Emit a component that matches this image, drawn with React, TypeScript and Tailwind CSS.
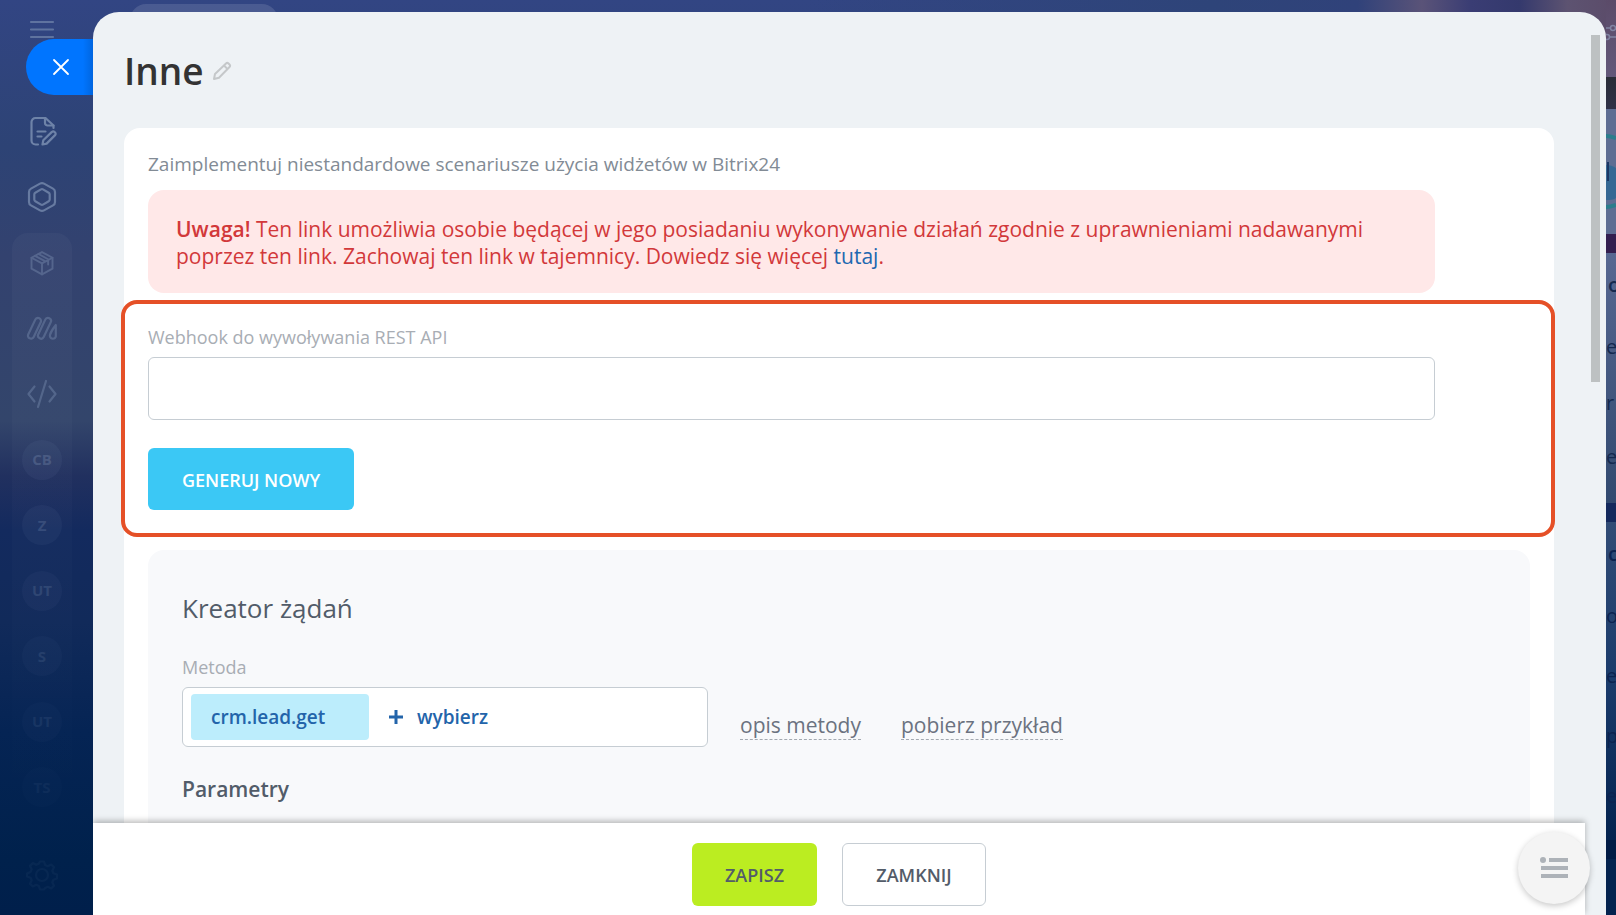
import type { ReactNode } from "react";

interface IconProps {
  size: number;
  children: ReactNode;
}

const Icon = ({ size, children }: IconProps) => (
  <svg
    width={size}
    height={size}
    viewBox="0 0 32 32"
    fill="none"
    stroke="currentColor"
    strokeWidth="2.2"
    strokeLinecap="round"
    strokeLinejoin="round"
    aria-hidden="true"
  >
    {children}
  </svg>
);

// avatars pinned in the left menu
const shortcuts = ["CB", "Z", "UT", "S", "UT", "TS"];

const Sidebar = () => (
  <aside className="relative w-[93px] shrink-0 text-[#7f93b5]">
    <nav className="flex h-full w-[84px] flex-col items-center">
      <button type="button" aria-label="Menu" className="mt-[13px] opacity-60">
        <Icon size={32}>
          <path d="M5 9h22M5 16.500h22M5 24h22" />
        </Icon>
      </button>

      <a href="#documents" aria-label="Dokumenty" className="mt-[70px] opacity-80">
        <Icon size={32}>
          <path d="M12 29.500H9.500a4 4 0 0 1-4-4V7a4 4 0 0 1 4-4h10l8 7.500V13" />
          <path d="M19 3v5a2.500 2.500 0 0 0 2.500 2.500h6" />
          <path d="M11.500 16.500h8M11.500 21.500h4" />
          <path d="M16.500 29.500l.8-4.200 8.600-8.400a1.800 1.800 0 0 1 2.600 0l.6.6a1.800 1.800 0 0 1 0 2.600l-8.500 8.500z" />
        </Icon>
      </a>

      <a href="#apps" aria-label="Aplikacje" className="mt-[34px] opacity-70">
        <Icon size={32}>
          <path d="M14 2.600a4 4 0 0 1 4 0l9 5a4 4 0 0 1 2 3.500v9.800a4 4 0 0 1-2 3.500l-9 5a4 4 0 0 1-4 0l-9-5a4 4 0 0 1-2-3.500v-9.800a4 4 0 0 1 2-3.500z" />
          <path d="M15 8.400a2 2 0 0 1 2 0l5.700 3.300a2 2 0 0 1 1 1.700v5.200a2 2 0 0 1-1 1.700L17 23.600a2 2 0 0 1-2 0l-5.700-3.300a2 2 0 0 1-1-1.700v-5.200a2 2 0 0 1 1-1.700z" />
        </Icon>
      </a>

      {/* Pinned group */}
      <div className="mt-5 flex h-[584px] w-[60px] flex-col items-center justify-between rounded-2xl bg-linear-to-b from-white/3 to-white/0 py-[10px]">
        <a href="#box" aria-label="Magazyn" className="flex size-10 items-center justify-center opacity-40">
          <Icon size={28}>
            <path d="M16 3.500l12 6.500v12.500L16 29 4 22.500V10z" />
            <path d="M4 10l12 6.500L28 10M16 16.500V29M8 7.800l12 6.400M12 5.700l11 6v6" />
          </Icon>
        </a>
        <a href="#marketing" aria-label="Marketing" className="flex size-10 items-center justify-center opacity-40">
          <Icon size={32}>
            <path d="M2.300 21.300L9.300 6.600a3 3 0 0 1 5.400 2.700L7.700 24a3 3 0 0 1-5.400-2.700z" />
            <path d="M12.300 21.300L19.300 6.600a3 3 0 0 1 5.400 2.700L17.700 24a3 3 0 0 1-5.400-2.700z" />
            <path d="M29.800 12v11.500a3 3 0 0 1-5.800 0c-.7-1.800 3-8 5.800-11.500z" />
          </Icon>
        </a>
        <a href="#dev" aria-label="Dla programistów" className="flex size-10 items-center justify-center opacity-40">
          <Icon size={32}>
            <path d="M8.500 8.500L2.500 16l6 7.500M23.500 8.500l6 7.500-6 7.500M20 3l-8 26" />
          </Icon>
        </a>
        {shortcuts.map((label, index) => (
          <a
            key={index}
            href="#shortcut"
            className="flex size-10 items-center justify-center rounded-full bg-[#7f93b5]/14 text-[15px] font-bold"
            style={{ opacity: 0.6 - index * 0.09 }}
          >
            <span className="opacity-55">{label}</span>
          </a>
        ))}
      </div>

      <button type="button" aria-label="Ustawienia" className="mt-[42px] opacity-6">
        <Icon size={32}>
          <path d="M14 2.500h4l1.200 3.600 2.600 1.100 3.400-1.700 2.800 2.800-1.700 3.400 1.100 2.600 3.600 1.200v4l-3.600 1.200-1.100 2.600 1.700 3.400-2.800 2.800-3.400-1.700-2.600 1.100L18 30.500h-4l-1.200-3.600-2.600-1.100-3.400 1.700L4 24.700l1.700-3.400-1.100-2.600L1 17.500v-3l3.600-1.600 1.100-2.600L4 6.900l2.800-2.800 3.400 1.700 2.600-1.100z" />
          <circle cx="16" cy="16" r="6" />
        </Icon>
      </button>
    </nav>

    {/* Close tab of the slider */}
    <button
      type="button"
      aria-label="Zamknij panel"
      className="absolute top-[39px] right-0 flex h-14 w-[67px] items-center rounded-l-full bg-linear-to-r from-[#0075ff] from-85% to-[#0066e0] pl-[26px] text-white"
    >
      <svg width="18" height="18" viewBox="0 0 18 18" fill="none" stroke="currentColor" strokeWidth="1.800" strokeLinecap="round">
        <path d="M2 2l14 14M16 2L2 16" />
      </svg>
    </button>
  </aside>
);

const RequestBuilder = () => (
  <section className="mt-[13px] rounded-t-2xl bg-[#f8f9fb] px-[34px] pt-10 pb-20">
    <h2 className="text-[26px] leading-9 text-[#525c69]">Kreator żądań</h2>

    <div className="mt-[29px] text-[18px] leading-6 text-[#a8adb4]" id="method-label">
      Metoda
    </div>
    <div className="mt-2 flex items-center">
      <div
        role="group"
        aria-labelledby="method-label"
        className="flex h-[60px] w-[526px] items-center rounded-md border border-[#c6cdd3] bg-white px-2 text-[19px] font-semibold text-[#2364aa]"
      >
        <span className="flex h-[46px] w-[178px] items-center rounded bg-[#bcedfc] pl-5">crm.lead.get</span>
        <button type="button" className="flex items-center gap-[14px] pl-5">
          <svg width="14" height="14" viewBox="0 0 14 14" fill="none" stroke="currentColor" strokeWidth="3" aria-hidden="true">
            <path d="M7 0v14M0 7h14" />
          </svg>
          wybierz
        </button>
      </div>
      <div className="flex gap-10 pt-[17px] pl-8 text-[21px] leading-[27px] text-[#6b7280]">
        <a href="#opis" className="border-b border-dashed border-[#a3a9b1]">
          opis metody
        </a>
        <a href="#przyklad" className="border-b border-dashed border-[#a3a9b1]">
          pobierz przykład
        </a>
      </div>
    </div>

    <h3 className="mt-[26px] text-[21px] leading-8 font-semibold text-[#525c69]">Parametry</h3>
  </section>
);

const Panel = () => (
  <main className="relative mt-3 flex min-w-0 flex-1 flex-col overflow-hidden rounded-t-[26px] bg-[#eef2f5]">
    <div className="min-h-0 flex-1 overflow-hidden pr-[52px] pl-[31px]">
      <header className="flex items-center gap-2 pt-8">
        <h1 className="text-[37px] leading-[54px] font-semibold text-[#333333]">Inne</h1>
        <button type="button" aria-label="Zmień nazwę" className="text-[#c5c8ca]">
          <svg width="20" height="20" viewBox="0 0 20 20" fill="none" stroke="currentColor" strokeWidth="2" strokeLinejoin="round">
            <path d="M2 18l1-5L14 2.500a1.800 1.800 0 0 1 2.500 0l1 1a1.800 1.800 0 0 1 0 2.500L7 16.800z" />
            <path d="M12 4.500l3.500 3.500" />
          </svg>
        </button>
      </header>

      <div className="mt-[30px] rounded-t-2xl bg-white px-6 pt-[22px]">
        <p className="text-[19px] leading-7 text-[#828b95]">
          Zaimplementuj niestandardowe scenariusze użycia widżetów w Bitrix24
        </p>

        {/* Security warning */}
        <div className="mt-3 mr-[95px] rounded-2xl bg-[#ffe8e8] px-7 pt-[26px] pb-[23px] text-[21px] leading-[27px] text-[#d2383a]">
          <b className="font-semibold">Uwaga!</b> Ten link umożliwia osobie będącej w jego posiadaniu wykonywanie działań
          zgodnie z uprawnieniami nadawanymi poprzez ten link. Zachowaj ten link w tajemnicy. Dowiedz się więcej{" "}
          <a href="#tutaj" className="text-[#2067b0]">
            tutaj
          </a>
          .
        </div>

        {/* Webhook, highlighted */}
        <section className="mt-[7px] -mr-[25px] -ml-[27px] rounded-2xl border-4 border-[#e55027] px-[23px] pt-[21px] pb-[23px]">
          <label htmlFor="webhook" className="block text-[18px] leading-6 text-[#a8adb4]">
            Webhook do wywoływania REST API
          </label>
          <div className="mt-2 pr-[93px]">
            <input
              id="webhook"
              type="text"
              className="block h-[63px] w-full rounded-md border border-[#c6cdd3] bg-white px-4 text-[20px]"
            />
          </div>
          <button
            type="button"
            className="mt-7 h-[62px] w-[206px] rounded-md bg-[#3bc8f5] pt-[2px] text-[18px] font-semibold text-white uppercase"
          >
            Generuj nowy
          </button>
        </section>

        <RequestBuilder />
      </div>
    </div>

    <footer className="z-10 mr-[21px] flex h-[92px] shrink-0 justify-center gap-[25px] bg-white pt-5 shadow-[0_-2px_6px_rgba(0,0,0,0.28)]">
      <button type="button" className="h-[63px] w-[125px] rounded-md bg-[#bbed21] pt-[2px] text-[18px] font-semibold text-[#535c69] uppercase">
        Zapisz
      </button>
      <button
        type="button"
        className="h-[63px] w-36 rounded-md border border-[#c6cdd3] bg-white pt-[2px] text-[18px] font-semibold text-[#535c69] uppercase"
      >
        Zamknij
      </button>
    </footer>

    {/* Scrollbar thumb */}
    <div className="absolute top-[23px] right-[6px] h-[347px] w-[9px] bg-[#bdc1c2]" />

    {/* Floating list button */}
    <button
      type="button"
      aria-label="Lista"
      className="absolute right-4 bottom-[11px] z-20 flex size-[72px] items-center justify-center rounded-full bg-[#f4f4f4] shadow-[0_2px_6px_rgba(0,0,0,0.22)]"
    >
      <svg width="30" height="24" viewBox="0 0 30 24" fill="#adb2b8" aria-hidden="true">
        <circle cx="4" cy="4" r="3" />
        <path d="M10 2h19v4H10zM2 10h27v4H2zM2 18h27v4H2z" />
      </svg>
    </button>
  </main>
);

// what stays visible of the profile page to the right of the slider
const PageEdge = () => (
  <div className="flex w-[10px] shrink-0 flex-col overflow-hidden text-[20px] leading-7 text-[#14294f]">
    <div className="h-[77px] bg-linear-to-b from-[#5b4b69] to-[#63587a] pt-[22px]">
      <svg width="10" height="20" viewBox="0 0 10 20" fill="none" stroke="#8184a3" strokeWidth="1.500">
        <path d="M0 6h4M4 15h6" />
        <circle cx="7" cy="6" r="2.500" />
        <circle cx="1" cy="15" r="2.500" />
      </svg>
    </div>
    <div className="h-8 bg-linear-to-b from-[#292d38] to-[#303148]" />
    <div className="h-[125px] bg-[#5e6d93]">
      <svg width="10" height="125" viewBox="0 0 10 125" fill="none">
        <path d="M0 56c4 0 7 1 10 3v30c-3 2-6 2-10 2z" fill="#356894" />
        <path d="M0 27c4 0 7 1 10 2M0 98c4 0 7-1 10-2" stroke="#2b7d8c" strokeWidth="4" />
        <path d="M2 53v19" stroke="#1b3765" strokeWidth="2" />
      </svg>
    </div>
    <div className="h-[19px] bg-[#331f50]" />
    <div className="flex h-[250px] flex-col bg-linear-to-b from-[#576892] to-[#31496f] pt-[18px]">
      <span className="pl-[2px] font-semibold">o</span>
      <span className="mt-[34px]">e</span>
      <span className="mt-7">r</span>
      <span className="mt-[26px]">e</span>
    </div>
    <div className="h-[19px] bg-[#14295d]" />
    <div className="flex h-[318px] flex-col bg-linear-to-b from-[#314c76] via-[#1a3b6b] to-[#04234f] pt-[18px] text-[#0b2350]">
      <span className="pl-[2px] font-semibold">c</span>
      <span className="mt-[34px]">o</span>
      <span className="mt-8">e</span>
      <span className="mt-8">p</span>
      <span className="mt-8">e</span>
    </div>
    <div className="h-[19px] bg-[#001b45]" />
    <div className="flex-1 bg-[#04234f]" />
  </div>
);

const App = () => {
  return (
    <div className="relative isolate flex h-screen overflow-hidden font-['Open_Sans','Noto_Sans',sans-serif]">
      {/* Wallpaper behind the slider */}
      <div className="absolute inset-0 -z-10 bg-[linear-gradient(180deg,#324583_0%,#2d4375_16%,#33426f_28%,#33456b_46%,#21305f_52%,#132a5e_58%,#112a5a_68%,#052454_80%,#00214c_94%,#001f4b_100%)]" />
      <div className="absolute inset-x-0 top-0 -z-10 h-10 bg-[linear-gradient(90deg,transparent_50%,#2e4479_75%,#30427a_84%,#5a5378_88%,#3a3d74_91%,#34396d_94%,#5d5371_97%,#5b4b69_100%)]" />
      <div className="absolute top-1 left-[130px] -z-10 h-10 w-[148px] rounded-2xl bg-white/12" />

      <Sidebar />
      <Panel />
      <PageEdge />
    </div>
  );
};

export default App;
